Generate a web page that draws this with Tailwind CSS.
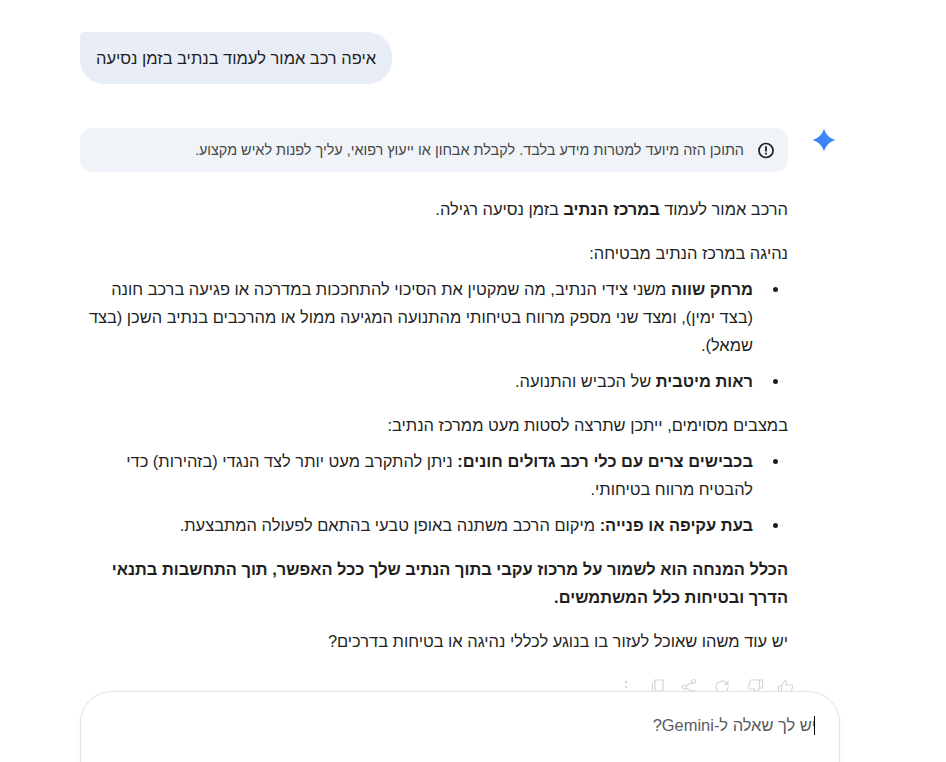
<!DOCTYPE html>
<html lang="he" dir="rtl">
<head>
<meta charset="utf-8">
<script src="https://cdn.jsdelivr.net/npm/@tailwindcss/browser@4"></script>
</head>
<body class="bg-white">
<div class="relative w-[946px] h-[762px] overflow-hidden bg-white font-['Liberation_Sans','Noto_Sans',sans-serif] text-[16.44px] leading-[28px] text-[#1f1f1f]">
  <div class="w-[760px] mr-[106px] pt-[32px]">
    <!-- user bubble -->
    <div class="flex justify-end">
      <div class="px-4 py-3 bg-[#e9eef6] rounded-[24px] rounded-tl-[4px] text-[16.48px]">איפה רכב אמור לעמוד בנתיב בזמן נסיעה</div>
    </div>
    <!-- response -->
    <div class="flex items-start mt-[44px]">
      <div class="w-[52px] pr-[4px] shrink-0 flex justify-start">
        <svg class="w-[24px] h-[24px]" viewBox="0 0 24 24" aria-hidden="true">
          <defs><linearGradient id="g" x1="0" y1="1" x2="1" y2="0"><stop offset="0" stop-color="#2f7bf6"/><stop offset="1" stop-color="#4a90f8"/></linearGradient></defs>
          <path fill="url(#g)" d="M12 .5C13.600 6.400 17.600 10.400 23.500 12C17.600 13.600 13.600 17.600 12 23.500C10.400 17.600 6.400 13.600 .5 12C6.400 10.400 10.400 6.400 12 .5Z"/>
        </svg>
      </div>
      <div class="w-[708px]">
        <div class="flex items-center gap-[12px] h-[44px] px-[12px] bg-[#f0f4f9] rounded-[12px] text-[14.42px] leading-[20px] text-[#444746]">
          <svg class="w-[20px] h-[20px] shrink-0" viewBox="0 0 20 20" aria-hidden="true">
            <circle cx="10" cy="10.500" r="7" fill="none" stroke="#1f1f1f" stroke-width="1.700"/>
            <rect x="9.100" y="6.300" width="1.800" height="5.200" fill="#1f1f1f"/>
            <rect x="9.100" y="12.700" width="1.800" height="1.800" fill="#1f1f1f"/>
          </svg>
          <span>התוכן הזה מיועד למטרות מידע בלבד. לקבלת אבחון או ייעוץ רפואי, עליך לפנות לאיש מקצוע.</span>
        </div>
        <div class="mt-[23px] flex flex-col gap-[16px]">
          <p>הרכב אמור לעמוד <b>במרכז הנתיב</b> בזמן נסיעה רגילה.</p>
          <div class="flex flex-col gap-[8px]">
            <p>נהיגה במרכז הנתיב מבטיחה:</p>
            <ul class="flex flex-col gap-[8px]">
              <li class="flex"><span class="w-[35px] shrink-0 pr-[10px] pt-[12px]"><span class="block w-[5px] h-[5px] rounded-full bg-[#1f1f1f]"></span></span><span><b>מרחק שווה</b> משני צידי הנתיב, מה שמקטין את הסיכוי להתחככות במדרכה או פגיעה ברכב חונה (בצד ימין), ומצד שני מספק מרווח בטיחותי מהתנועה המגיעה ממול או מהרכבים בנתיב השכן (בצד שמאל).</span></li>
              <li class="flex"><span class="w-[35px] shrink-0 pr-[10px] pt-[12px]"><span class="block w-[5px] h-[5px] rounded-full bg-[#1f1f1f]"></span></span><span><b>ראות מיטבית</b> של הכביש והתנועה.</span></li>
            </ul>
          </div>
          <div class="flex flex-col gap-[8px]">
            <p>במצבים מסוימים, ייתכן שתרצה לסטות מעט ממרכז הנתיב:</p>
            <ul class="flex flex-col gap-[8px]">
              <li class="flex"><span class="w-[35px] shrink-0 pr-[10px] pt-[12px]"><span class="block w-[5px] h-[5px] rounded-full bg-[#1f1f1f]"></span></span><span><b>בכבישים צרים עם כלי רכב גדולים חונים:</b> ניתן להתקרב מעט יותר לצד הנגדי (בזהירות) כדי להבטיח מרווח בטיחותי.</span></li>
              <li class="flex"><span class="w-[35px] shrink-0 pr-[10px] pt-[12px]"><span class="block w-[5px] h-[5px] rounded-full bg-[#1f1f1f]"></span></span><span><b>בעת עקיפה או פנייה:</b> מיקום הרכב משתנה באופן טבעי בהתאם לפעולה המתבצעת.</span></li>
            </ul>
          </div>
          <p><b>הכלל המנחה הוא לשמור על מרכוז עקבי בתוך הנתיב שלך ככל האפשר, תוך התחשבות בתנאי הדרך ובטיחות כלל המשתמשים.</b></p>
          <p>יש עוד משהו שאוכל לעזור בו בנוגע לכללי נהיגה או בטיחות בדרכים?</p>
        </div>
        <!-- action icons -->
        <div class="mt-[23px] h-[18px] flex items-center text-[#d3d5d7]">
          <svg class="w-[18px] h-[18px] mr-[-7px]" viewBox="0 0 18 18" fill="none" stroke="currentColor" stroke-width="1.200"><path d="M1.500 8h3v8h-3zM4.500 8l3.500-5.500c1 0 1.800.8 1.800 1.800L9.200 7h5.300c.8 0 1.300.8 1.100 1.500l-1.700 6.500c-.2.600-.6 1-1.200 1H4.500"/></svg>
          <svg class="w-[18px] h-[18px] mr-[13px]" viewBox="0 0 18 18" fill="none" stroke="currentColor" stroke-width="1.200"><path d="M16.500 10h-3V2h3zM13.500 10L10 15.500c-1 0-1.800-.8-1.800-1.800L8.800 11H3.500c-.8 0-1.300-.8-1.100-1.500L4.100 3c.2-.6.600-1 1.200-1h8.200"/></svg>
          <svg class="w-[18px] h-[18px] mr-[15px]" viewBox="0 0 18 18" fill="none" stroke="currentColor" stroke-width="1.200"><path d="M15 9a6 6 0 1 1-1.800-4.300L15 6.500M15 2.500v4h-4"/></svg>
          <svg class="w-[18px] h-[18px] mr-[15px]" viewBox="0 0 18 18" fill="none" stroke="currentColor" stroke-width="1.200"><circle cx="13.500" cy="3.500" r="2"/><circle cx="4.500" cy="9" r="2"/><circle cx="13.500" cy="14.500" r="2"/><path d="M6.200 8l5.600-3.500M6.200 10l5.600 3.500"/></svg>
          <svg class="w-[18px] h-[18px] mr-[13px]" viewBox="0 0 18 18" fill="none" stroke="currentColor" stroke-width="1.200"><path d="M6 2h8v11H6zM3.500 5v11h8"/></svg>
          <svg class="w-[18px] h-[18px] mr-[14px]" viewBox="0 0 18 18" fill="currentColor"><circle cx="9" cy="4" r="1.200"/><circle cx="9" cy="9" r="1.200"/><circle cx="9" cy="14" r="1.200"/></svg>
        </div>
      </div>
    </div>
  </div>
  <!-- input card overlays the bottom of the page -->
  <div class="absolute left-[80px] top-[691px] w-[760px] h-[120px] bg-white border border-[#e3e3e3] rounded-[32px] pt-[19px] pr-[23px] text-[#575b5f] shadow-[0_2px_6px_rgba(0,0,0,0.04)]">
    <span class="relative block">יש לך שאלה ל-Gemini?<span class="absolute right-[1px] top-[5px] w-[1px] h-[19px] bg-black"></span></span>
  </div>
</div>
</body>
</html>
